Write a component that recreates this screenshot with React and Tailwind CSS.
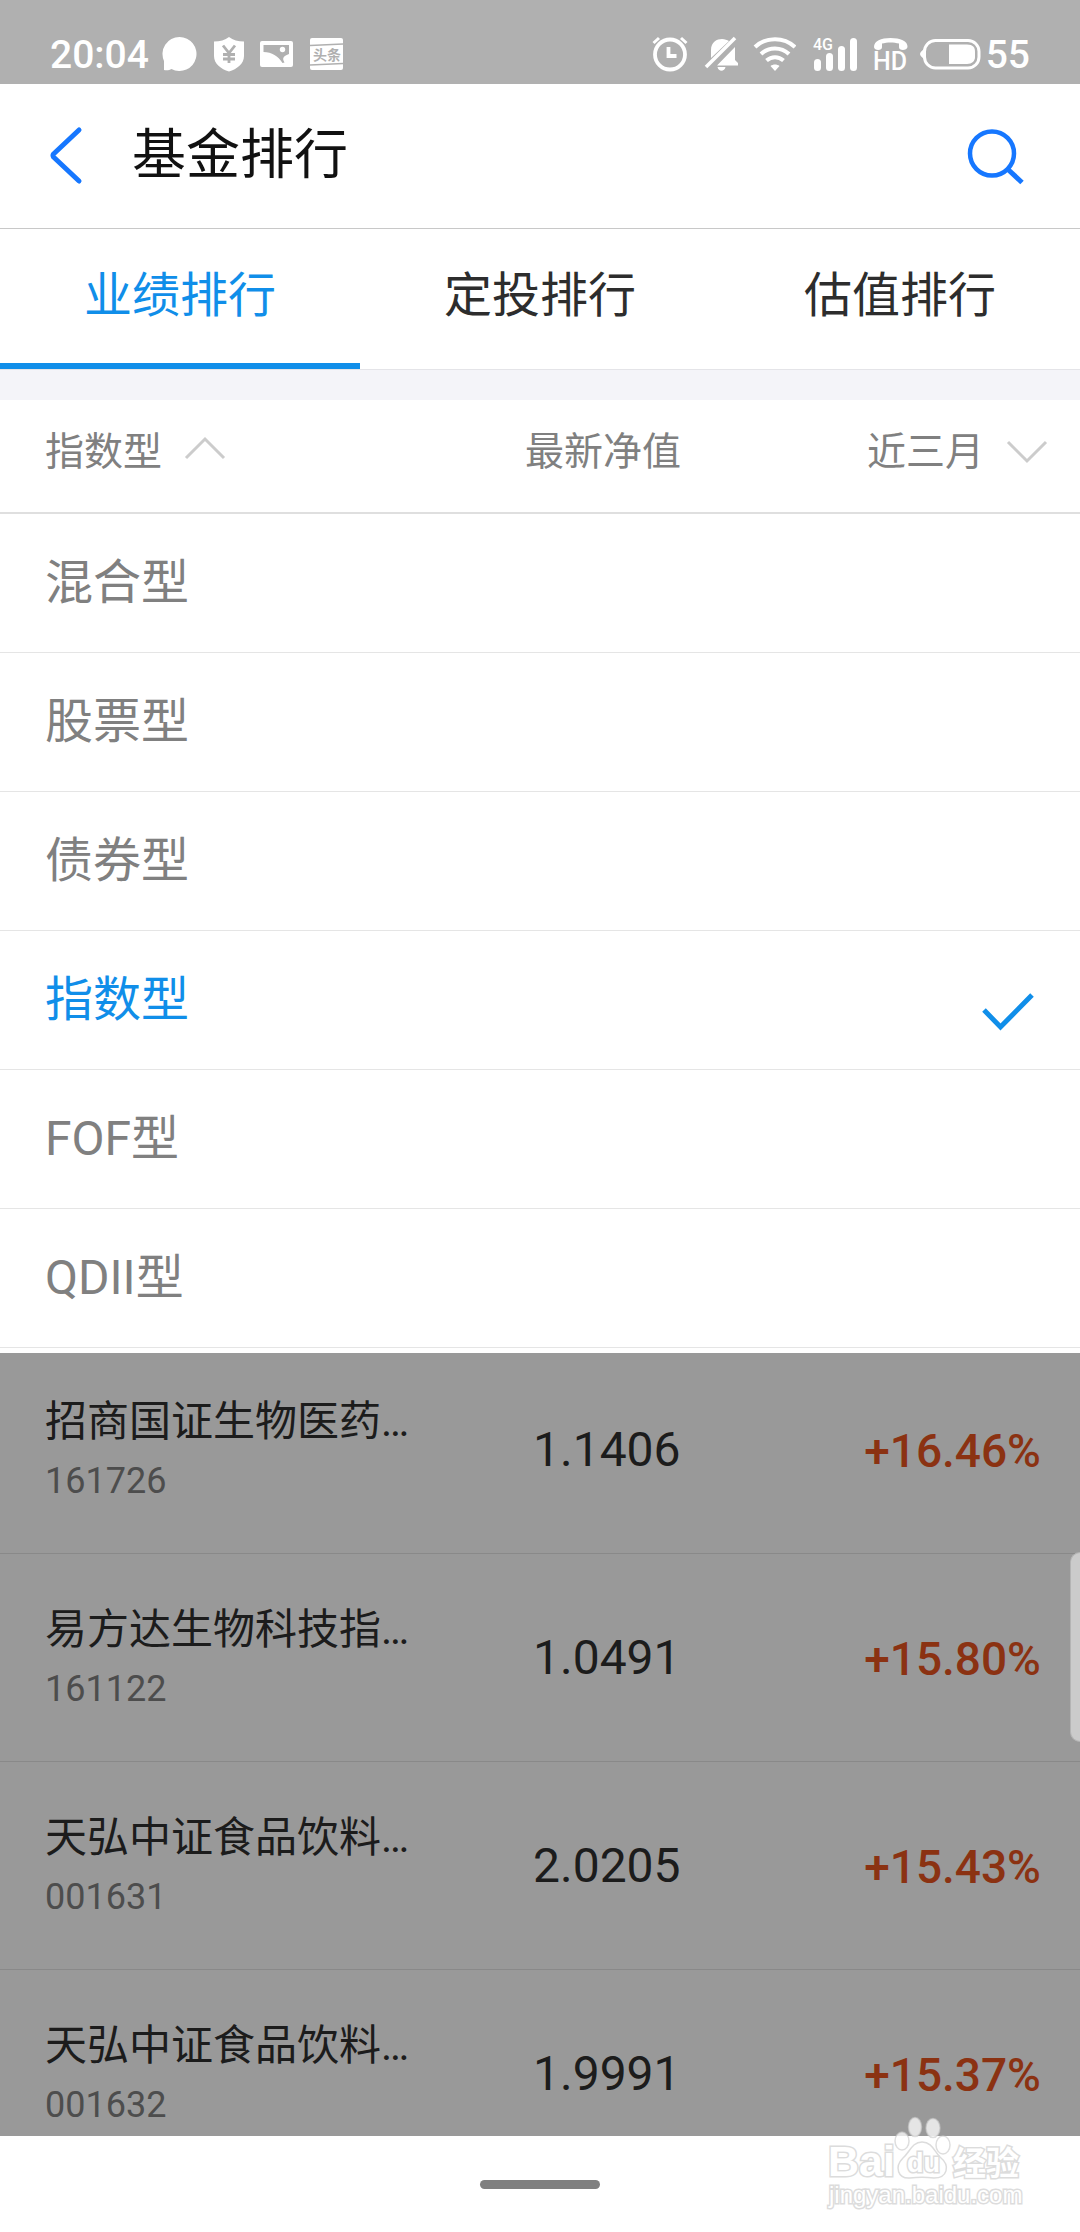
import React, { useState } from 'react'

const TABS = ['业绩排行', '定投排行', '估值排行']

const FUND_TYPES = ['混合型', '股票型', '债券型', '指数型', 'FOF型', 'QDII型']

const FUNDS = [
  { name: '招商国证生物医药…', code: '161726', nav: '1.1406', change: '+16.46%' },
  { name: '易方达生物科技指…', code: '161122', nav: '1.0491', change: '+15.80%' },
  { name: '天弘中证食品饮料…', code: '001631', nav: '2.0205', change: '+15.43%' },
  { name: '天弘中证食品饮料…', code: '001632', nav: '1.9991', change: '+15.37%' },
]

function StatusBar() {
  return (
    <div className="flex h-[84px] shrink-0 items-center justify-between bg-[#b0b0b0] px-[50px] pt-6 text-white">
      <div className="flex items-center">
        <span className="pt-0.5 text-[39px] leading-10 font-medium">20:04</span>
        <svg className="ml-3" width="36" height="36" viewBox="0 0 36 36" fill="currentColor">
          <path d="M18.500 1a17 17 0 1 1-8 32c-2 1.300-5 1.500-7.500 1V25A17 17 0 0 1 18.500 1z" />
        </svg>
        <svg className="ml-4" width="32" height="36" viewBox="0 0 32 36">
          <path fill="currentColor" d="M16 1c4 3 9 4.500 15 4.500V20c0 8-7 13-15 15.500C8 33 1 28 1 20V5.500C7 5.500 12 4 16 1z" />
          <path d="M10 9.500l6 7.500 6-7.500M16 17v10M10 18.500h12M10 23h12" fill="none" stroke="#b0b0b0" strokeWidth="2.800" />
        </svg>
        <svg className="ml-3.5" width="36" height="36" viewBox="0 0 36 36">
          <rect x="1" y="5" width="33" height="26" rx="2" fill="currentColor" />
          <path d="M4.500 9h25.500v9c-5 2-7.500 3.500-4.500 8.500l-2 .5C19 20 13 16 4.500 16z" fill="#b0b0b0" />
          <circle cx="23.500" cy="13.500" r="2.700" fill="currentColor" />
        </svg>
        <svg className="ml-3.5" width="36" height="36" viewBox="0 0 36 36">
          <rect x="1" y="2" width="33" height="32" rx="2" fill="currentColor" />
          <path d="M1 9.500l33-1.500M1 29l33-1.500" stroke="#b0b0b0" strokeWidth="1.500" />
          <text x="4" y="24" fontSize="14" fontWeight="700" fill="#b0b0b0">头条</text>
        </svg>
      </div>
      <div className="flex items-center">
        <svg width="36" height="36" viewBox="0 0 36 36" fill="none" stroke="currentColor">
          <circle cx="18" cy="18.500" r="15" strokeWidth="3.800" />
          <path d="M16.500 11v9h8" strokeWidth="3.800" />
          <path d="M1.500 7L7 2M29 2l5.500 5" strokeWidth="3" />
        </svg>
        <svg className="ml-4" width="36" height="36" viewBox="0 0 36 36" fill="currentColor">
          <path d="M7 22V14C7 6 13 3 18 3c3 0 5 1 7 2z M13 29.500L31 11v13l3 3v2.500zM13.500 31h8c-1 5-7 5-8 0z" />
          <path d="M2 31L31 2" stroke="currentColor" strokeWidth="3.500" />
        </svg>
        <svg className="ml-3" width="44" height="36" viewBox="0 0 44 36" fill="none" stroke="currentColor" strokeWidth="4">
          <path d="M3 11C14 .5 32 .5 43 11M9 18c8-7.500 20-7.500 28 0M14.500 24.500c5-4.500 12-4.500 17 0" />
          <path d="M18.500 30c2.500-2 6.500-2 9 0L23 35z" fill="currentColor" stroke="none" />
        </svg>
        <svg className="ml-4 overflow-visible" width="44" height="36" viewBox="0 0 44 36" fill="currentColor">
          <text x="1" y="14" fontSize="16" fontWeight="500">4G</text>
          <rect x="2" y="23" width="7" height="12" rx="3.500" />
          <rect x="14" y="17" width="7" height="18" rx="3.500" />
          <rect x="26" y="10" width="7" height="25" rx="3.500" />
          <rect x="38" y="2" width="7" height="33" rx="3.500" />
        </svg>
        <svg className="ml-4 overflow-visible" width="36" height="36" viewBox="0 0 36 36" fill="currentColor">
          <path d="M2 11C2 5 9 2 18.500 2S36 5 35.500 11c-.5 4-9 4-8.500 0V7.500c-5-1.500-12-1.500-17 0V11c.5 4-8 4-8 0z" />
          <text x="1" y="34" fontSize="25" fontWeight="500">HD</text>
        </svg>
        <svg className="ml-3" width="62" height="36" viewBox="0 0 62 36">
          <rect x="4.500" y="4.500" width="54.500" height="27.500" rx="11" fill="none" stroke="currentColor" strokeWidth="3" />
          <path d="M4 13c-2 2-4 3-4 5s2 3 4 5z" fill="currentColor" />
          <path d="M29 8.500h18c6 0 8 3 8 7v5.500c0 4-3 7-8 7H29z" fill="currentColor" />
        </svg>
        <span className="ml-1 pt-0.5 text-[39px] leading-10 font-medium">55</span>
      </div>
    </div>
  )
}

function Watermark() {
  return (
    <div className="absolute right-[58px] bottom-5">
      <svg className="overflow-visible font-['Liberation_Sans','Noto_Sans_CJK_SC',sans-serif]" width="194" height="96" viewBox="0 0 194 96" fill="#fff" stroke="#dcdcdc" strokeWidth="1.500">
        <text x="0" y="60" fontSize="43" fontWeight="700" paintOrder="stroke" strokeWidth="3">Bai</text>
        <g stroke="#c8c8c8" strokeOpacity="0.6" fillOpacity="0.75">
          <ellipse cx="74" cy="25" rx="7" ry="9" />
          <ellipse cx="87" cy="11" rx="6.500" ry="9.500" />
          <ellipse cx="105" cy="12" rx="7" ry="9.500" />
          <ellipse cx="115" cy="29" rx="7" ry="9" />
        </g>
        <path d="M94 26c10 0 12 9 18 15 11 9 7 21-6 21-8-1-16-1-24 0-12 1-16-11-7-20 7-6 9-16 19-16z" />
        <text x="79" y="56" fontSize="27" fontWeight="700" paintOrder="stroke" strokeWidth="3">du</text>
        <text x="125" y="59" fontSize="33" fontWeight="700" paintOrder="stroke" strokeWidth="3">经验</text>
        <text x="1" y="87" fontSize="24" paintOrder="stroke" strokeWidth="3">jingyan.baidu.com</text>
      </svg>
    </div>
  )
}

export default function App() {
  const [tab, setTab] = useState(0)
  const [type, setType] = useState('指数型')

  return (
    <div className="relative flex h-screen flex-col overflow-hidden bg-white font-['Roboto','Noto_Sans_CJK_SC',sans-serif]">
      <StatusBar />

      <header className="flex h-[145px] shrink-0 items-center border-b border-[#c8c8c8] pr-[54px] pl-12">
        <button type="button" aria-label="返回">
          <svg width="36" height="60" viewBox="0 0 36 60" fill="none" stroke="#1677ff" strokeWidth="5" strokeLinecap="round" strokeLinejoin="round">
            <path d="M31 4L5.500 28q-1 1.500 0 3L31 55" />
          </svg>
        </button>
        <h1 className="ml-12 flex-1 text-[54px] leading-[72px] text-[#111]">基金排行</h1>
        <button type="button" aria-label="搜索">
          <svg width="60" height="60" viewBox="0 0 60 60" fill="none" stroke="#1677ff" strokeWidth="4.500">
            <circle cx="26" cy="27.500" r="22" />
            <path d="M41.500 43L56 56.500" strokeWidth="5" />
          </svg>
        </button>
      </header>

      <nav className="grid shrink-0 grid-cols-3 border-b border-[#e4e4e8]">
        {TABS.map((label, i) => (
          <button key={label} type="button" onClick={() => setTab(i)}
            className={`h-[140px] border-b-[6px] text-[48px] leading-[64px] ${i === tab ? 'border-[#108ee9] text-[#108ee9]' : 'border-transparent text-[#2d2d2d]'}`}>
            {label}
          </button>
        ))}
      </nav>

      <div className="h-[30px] shrink-0 bg-[#f4f4f9]" />

      <div className="grid h-[114px] shrink-0 grid-cols-3 items-center border-b-2 border-[#dfdfdf] pb-2 text-[39px] leading-[52px] text-[#808080]">
        <button type="button" aria-expanded="true" className="flex items-center gap-[22px] pl-[45px]">
          指数型
          <svg className="mb-2" width="42" height="24" viewBox="0 0 42 24" fill="none" stroke="#ccc" strokeWidth="3">
            <path d="M2 22L21 3l19 19" />
          </svg>
        </button>
        <span className="pl-[126px] text-center">最新净值</span>
        <button type="button" className="flex items-center justify-end gap-[22px] pr-8">
          近三月
          <svg width="42" height="24" viewBox="0 0 42 24" fill="none" stroke="#ccc" strokeWidth="3">
            <path d="M2 2l19 19L40 2" />
          </svg>
        </button>
      </div>

      <ul className="relative z-10 shrink-0 bg-white pb-[5px]">
        {FUND_TYPES.map(item => (
          <li key={item}>
            <button type="button" onClick={() => setType(item)}
              className={`flex h-[139px] w-full items-center justify-between border-b border-[#e5e5e5] pr-11 pl-[45px] text-[48px] leading-[64px] ${item === type ? 'text-[#108ee9]' : 'text-[#808080]'}`}>
              {item}
              {item === type && (
                <svg className="mt-6" width="56" height="40" viewBox="0 0 56 40" fill="none" stroke="currentColor" strokeWidth="5">
                  <path d="M4 18l16.500 17L52 3" />
                </svg>
              )}
            </button>
          </li>
        ))}
      </ul>

      <section className="relative -mt-2 min-h-0 flex-1 overflow-hidden">
        <table className="w-full table-fixed">
          <tbody>
            {FUNDS.map(fund => (
              <tr key={fund.code} className="h-[208px] border-b border-[#e5e5e5]">
                <td className="w-[46%] pt-1 pl-[45px] text-left whitespace-nowrap">
                  <div className="text-[42px] leading-[60px] text-[#303030]">{fund.name}</div>
                  <div className="text-[36px] leading-[58px] text-[#808080]">{fund.code}</div>
                </td>
                <td className="w-[20%] pt-0.5 pl-1 text-center text-[48px] leading-[64px] text-[#303030]">{fund.nav}</td>
                <td className="pt-1 pr-[39px] text-right text-[46px] leading-[64px] font-medium text-[#e8541e]">{fund.change}</td>
              </tr>
            ))}
          </tbody>
        </table>
        {/* scrim behind the open type menu */}
        <div className="absolute inset-0 bg-black/40" />
      </section>

      <div className="absolute top-[1552px] right-0 h-[190px] w-[10px] rounded-l-xl border border-r-0 border-[#b4b4b4] bg-[#cbcbcb]" />

      <footer className="flex h-24 shrink-0 items-center justify-center bg-white">
        <div className="h-[9px] w-[120px] rounded-full bg-[#808080]" />
      </footer>
      <Watermark />
    </div>
  )
}
